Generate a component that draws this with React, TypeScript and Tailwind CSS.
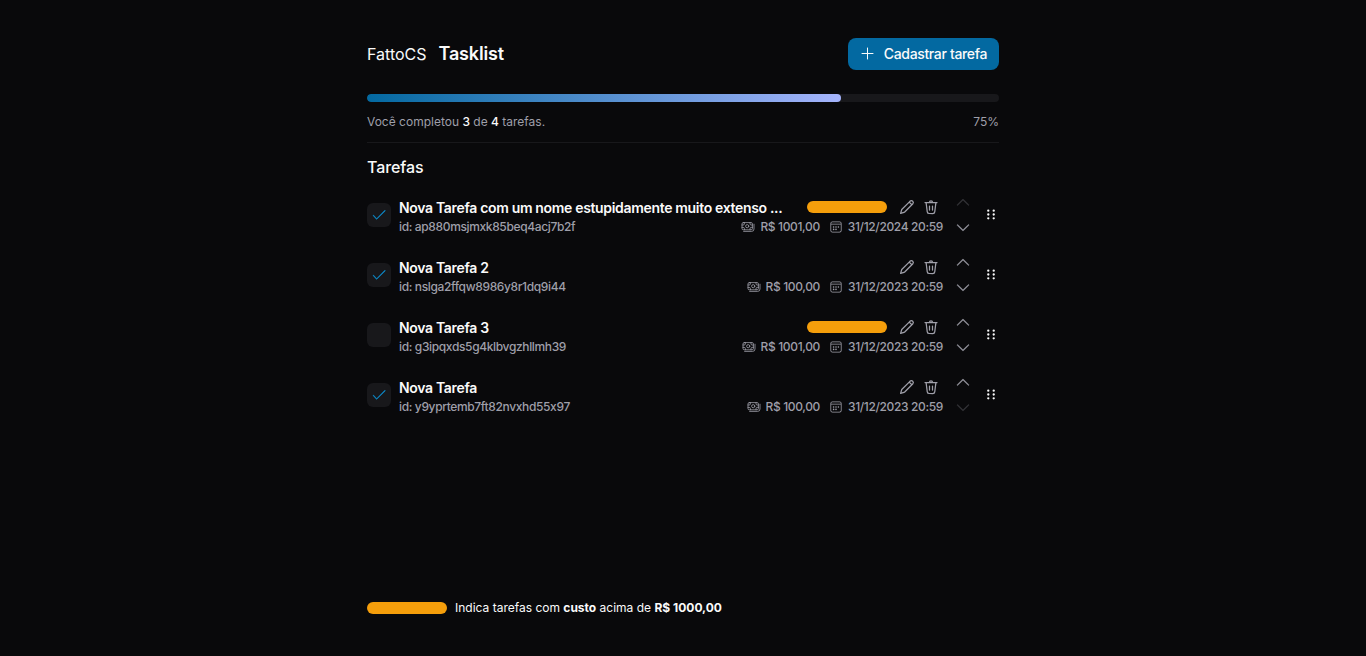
import React from 'react';

type IconProps = { d: string; className?: string };

function Icon({ d, className = 'size-4' }: IconProps) {
  return (
    <svg viewBox="0 0 20 20" fill="currentColor" stroke="currentColor" strokeWidth="0.35" className={`shrink-0 ${className}`}>
      <path d={d} />
    </svg>
  );
}

function LineIcon({ d, weight = 1 }: { d: string; weight?: number }) {
  return (
    <svg viewBox="0 0 16 16" fill="none" stroke="currentColor" strokeWidth={weight} strokeLinecap="round" strokeLinejoin="round" className="size-4 shrink-0">
      <path d={d} />
    </svg>
  );
}

const ADD = 'M7.5 2v11M2 7.5h11';
const EDIT = 'M10.2 3.1 3 10.3a1.6 1.6 0 0 0-.4.7l-1 3.4 3.4-1a1.6 1.6 0 0 0 .7-.4l7.2-7.2.8-.8a1.85 1.85 0 0 0-2.7-2.7l-.8.8Zm0 0 2.7 2.7';
const TRASH = 'M2 3.5h12M6.5 3.3a1.5 1.5 0 0 1 3 0M3.1 3.7l1.15 9.1A2 2 0 0 0 6.2 14.5h3.6a2 2 0 0 0 1.95-1.7l1.15-9.1M6.5 7v4M9.5 7v4';
const CHECK = 'M3.37 10.17a.5.5 0 0 0-.74.66l4 4.5c.19.22.52.23.72.02l10.5-10.5a.5.5 0 0 0-.7-.7L7.02 14.27l-3.65-4.1Z';
const UP = 'M4.15 12.35a.5.5 0 0 0 .7 0L10 7.21l5.15 5.14a.5.5 0 0 0 .7-.7l-5.5-5.5a.5.5 0 0 0-.7 0l-5.5 5.5a.5.5 0 0 0 0 .7Z';
const DOWN = 'M15.85 7.65a.5.5 0 0 0-.7 0L10 12.79 4.85 7.65a.5.5 0 0 0-.7.7l5.5 5.5c.2.2.5.2.7 0l5.5-5.5a.5.5 0 0 0 0-.7Z';
const CALENDAR = 'M7 11a1 1 0 1 0 0-2 1 1 0 0 0 0 2Zm1 2a1 1 0 1 1-2 0 1 1 0 0 1 2 0Zm2-2a1 1 0 1 0 0-2 1 1 0 0 0 0 2Zm1 2a1 1 0 1 1-2 0 1 1 0 0 1 2 0Zm2-2a1 1 0 1 0 0-2 1 1 0 0 0 0 2Zm4-5.5A2.5 2.5 0 0 0 14.5 3h-9A2.5 2.5 0 0 0 3 5.5v9A2.5 2.5 0 0 0 5.5 17h9a2.5 2.5 0 0 0 2.5-2.5v-9ZM4 7h12v7.5c0 .83-.67 1.5-1.5 1.5h-9A1.5 1.5 0 0 1 4 14.5V7Zm1.5-3h9c.83 0 1.5.67 1.5 1.5V6H4v-.5C4 4.67 4.67 4 5.5 4Z';

function CalendarIcon() {
  return (
    <svg viewBox="0 0 20 20" fill="currentColor" className="size-4 shrink-0">
      <path d={CALENDAR} />
    </svg>
  );
}

function MoneyIcon() {
  return (
    <svg viewBox="0 0 20 20" fill="none" stroke="currentColor" strokeLinecap="round" className="size-4 shrink-0">
      <rect x="2.5" y="4.5" width="13" height="9" rx="1.6" />
      <circle cx="9" cy="9" r="2" />
      <path d="M5.5 4.5V6A1.5 1.5 0 0 1 4 7.5H2.5M12.5 4.5V6A1.5 1.5 0 0 0 14 7.5h1.5M5.5 13.5V12A1.5 1.5 0 0 0 4 10.5H2.5M12.5 13.5V12a1.5 1.5 0 0 1 1.5-1.5h1.5" />
      <path d="M17.5 6.5v6a3 3 0 0 1-3 3h-10" />
    </svg>
  );
}

function GripIcon() {
  return (
    <svg viewBox="0 0 20 20" fill="currentColor" className="size-4 shrink-0 text-zinc-50">
      {[4.6, 9.4, 14.2].map((y) => (
        <React.Fragment key={y}>
          <circle cx="6.6" cy={y} r="1.45" />
          <circle cx="13.4" cy={y} r="1.45" />
        </React.Fragment>
      ))}
    </svg>
  );
}

type Task = { name: string; id: string; cost: string; date: string; done: boolean; expensive: boolean };

const tasks: Task[] = [
  { name: 'Nova Tarefa com um nome estupidamente muito extenso ...', id: 'ap880msjmxk85beq4acj7b2f', cost: 'R$ 1001,00', date: '31/12/2024 20:59', done: true, expensive: true },
  { name: 'Nova Tarefa 2', id: 'nslga2ffqw8986y8r1dq9i44', cost: 'R$ 100,00', date: '31/12/2023 20:59', done: true, expensive: false },
  { name: 'Nova Tarefa 3', id: 'g3ipqxds5g4klbvgzhllmh39', cost: 'R$ 1001,00', date: '31/12/2023 20:59', done: false, expensive: true },
  { name: 'Nova Tarefa', id: 'y9yprtemb7ft82nvxhd55x97', cost: 'R$ 100,00', date: '31/12/2023 20:59', done: true, expensive: false },
];

function TaskRow({ task, first, last }: { task: Task; first: boolean; last: boolean }) {
  return (
    <li className="flex h-[50px] items-center gap-2">
      <button className="flex size-6 shrink-0 items-center justify-center rounded-md bg-zinc-900 text-[#0b93d6]">
        {task.done && <Icon d={CHECK} />}
      </button>
      <div className="flex min-w-0 flex-1 flex-col gap-px pt-[3px]">
        <div className="flex h-5 items-center gap-2">
          <h3 className="min-w-0 flex-1 pt-0.5 text-sm font-semibold tracking-[-0.33px] whitespace-nowrap text-zinc-50">{task.name}</h3>
          {task.expensive && <span className="h-3 w-20 shrink-0 rounded-full bg-[#f59e0b]" />}
          <div className="flex text-zinc-400">
            <button className="flex size-6 items-center justify-center"><LineIcon d={EDIT} weight={1.25} /></button>
            <button className="flex size-6 items-center justify-center"><LineIcon d={TRASH} weight={1.25} /></button>
          </div>
        </div>
        <div className="flex h-[18px] items-center justify-between text-xs font-medium tracking-[-0.36px] text-zinc-400">
          <span>id: {task.id}</span>
          <div className="flex items-center gap-2">
            <span className="flex items-center gap-1"><MoneyIcon />{task.cost}</span>
            <span className="flex items-center gap-1"><CalendarIcon />{task.date}</span>
          </div>
        </div>
      </div>
      <div className="flex flex-col text-zinc-400">
        <button className={`flex size-6 items-center justify-center ${first ? 'opacity-30' : ''}`}><Icon d={UP} className="size-5" /></button>
        <button className={`flex size-6 items-center justify-center ${last ? 'opacity-30' : ''}`}><Icon d={DOWN} className="size-5" /></button>
      </div>
      <GripIcon />
    </li>
  );
}

export default function App() {
  return (
    <div className="flex h-screen justify-center overflow-hidden bg-zinc-950 font-['Inter',sans-serif] text-zinc-50">
      <main className="flex w-[632px] flex-col pt-[38px] pb-10">
        <header className="flex h-8 items-center justify-between">
          <h1 className="flex items-center gap-3 text-base">
            <span>FattoCS</span>
            <span className="text-lg font-semibold tracking-[-0.15px]">Tasklist</span>
          </h1>
          <button className="flex h-8 items-center gap-2 rounded-lg bg-[#0369a1] px-3 text-sm font-medium tracking-tight">
            <LineIcon d={ADD} />
            Cadastrar tarefa
          </button>
        </header>
        <div className="mt-6 h-2 shrink-0 overflow-hidden rounded-full bg-zinc-900">
          <div className="h-2 w-3/4 rounded-full bg-linear-to-r/srgb from-[#0369a1] to-[#a5b4fc]" />
        </div>
        <div className="flex h-[41px] shrink-0 items-center justify-between border-b border-zinc-900 text-xs text-zinc-400">
          <p>Você completou <span className="font-medium text-zinc-50">3</span> de <span className="font-medium text-zinc-50">4</span> tarefas.</p>
          <span>75%</span>
        </div>
        <h2 className="mt-3 text-base font-medium tracking-[-0.08px]">Tarefas</h2>
        <ul className="mt-[11px] flex flex-1 flex-col gap-2.5">
          {tasks.map((task, i) => (
            <TaskRow key={task.id} task={task} first={i === 0} last={i === tasks.length - 1} />
          ))}
        </ul>
        <footer className="flex h-4 items-center gap-2 text-xs">
          <span className="h-3 w-20 rounded-full bg-[#f59e0b]" />
          <p>Indica tarefas com <strong className="font-bold">custo</strong> acima de <strong className="font-bold">R$ 1000,00</strong></p>
        </footer>
      </main>
    </div>
  );
}
